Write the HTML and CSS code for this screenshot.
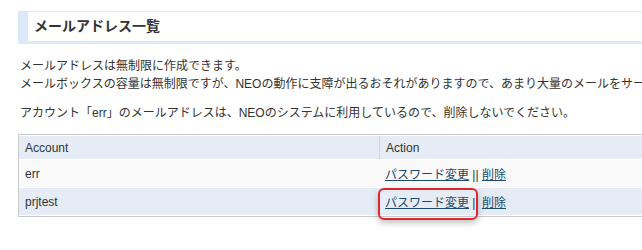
FILE: index.html
```html
<!DOCTYPE html>
<html lang="ja">
<head>
    <meta charset="UTF-8">
    <meta name="viewport" content="width=device-width, initial-scale=1.0">
    <title>メールアドレス一覧</title>
    <link rel="stylesheet" href="styles.css">
</head>
<body>
    <div id="content">
        <h2 class="box-title">メールアドレス一覧</h2>
        <p class="note">
            メールアドレスは無制限に作成できます。<br>
            メールボックスの容量は無制限ですが、NEOの動作に支障が出るおそれがありますので、あまり大量のメールをサーバーに保存しないようにしてください。
        </p>
        <p class="note">アカウント「err」のメールアドレスは、NEOのシステムに利用しているので、削除しないでください。</p>
        <table class="mail-list">
            <tr>
                <th class="col-account">Account</th>
                <th class="col-action">Action</th>
            </tr>
            <tr class="row-odd">
                <td>err</td>
                <td><a href="#">パスワード変更</a> || <a href="#">削除</a></td>
            </tr>
            <tr class="row-even">
                <td>prjtest</td>
                <td><a href="#" class="marked">パスワード変更</a> || <a href="#">削除</a></td>
            </tr>
        </table>
    </div>
</body>
</html>
```

FILE: styles.css
```css
html
{
    overflow: hidden;
}

body
{
    margin: 0;
    color: #333;
    font-family: "Liberation Sans", "Noto Sans CJK JP", sans-serif;
    font-size: 12px;
    background: #fff;
}

#content
{
    width: 800px;
    padding: 11px 0 20px 18px;
}

.box-title
{
    margin: 0;
    height: 29px;
    line-height: 29px;
    padding: 0 6px;
    font-size: 14px;
    font-weight: bold;
    color: #333;
    border-top: 1px solid #dde9f6;
    border-left: 10px solid #dbe9f8;
    border-bottom: 3px solid #dbe9f8;
}

.note
{
    margin: 13px 0 0 2px;
    line-height: 18px;
    white-space: nowrap;
}

.note + .note
{
    margin-top: 11px;
}

.mail-list
{
    width: 100%;
    margin-top: 12px;
    border: 1px solid #c9c9c9;
    border-collapse: separate;
    border-spacing: 0 1px;
}

.mail-list th,
.mail-list td
{
    text-align: left;
    font-weight: normal;
    padding: 0 6px;
}

.mail-list th
{
    height: 23px;
    background: #e5ecf5;
}

.mail-list .col-account
{
    width: 348px;
}

.mail-list .col-action
{
    border-left: 1px solid #d4d4d4;
}

.mail-list td
{
    height: 27px;
}

.row-odd td
{
    background: #f9f9f9;
}

.row-even td
{
    background: #e5ecf5;
}

.mail-list a
{
    color: #1b4a6b;
}

.marked
{
    position: relative;
}

.marked::after
{
    content: "";
    position: absolute;
    left: -7px;
    right: -9px;
    top: -8px;
    bottom: -10px;
    border: 2px solid #e0262c;
    border-radius: 6px;
    box-shadow: 0 3px 6px rgba(0, 0, 0, 0.25);
}
```
